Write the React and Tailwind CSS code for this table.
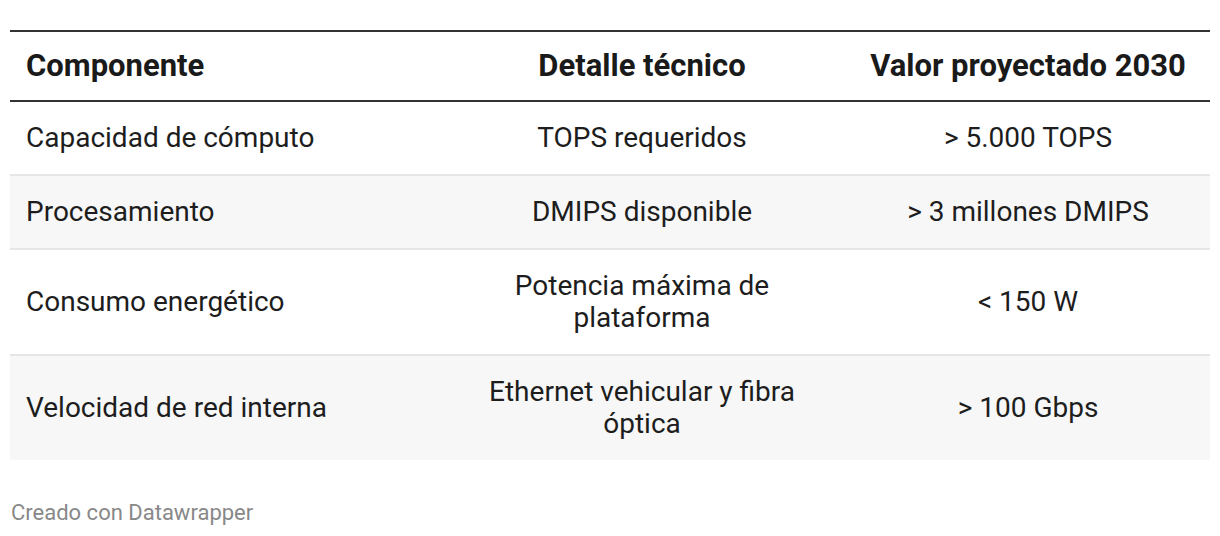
import React from "react";

const rows = [
  ["Capacidad de cómputo", "TOPS requeridos", "> 5.000 TOPS"],
  ["Procesamiento", "DMIPS disponible", "> 3 millones DMIPS"],
  ["Consumo energético", "Potencia máxima de plataforma", "< 150 W"],
  ["Velocidad de red interna", "Ethernet vehicular y fibra óptica", "> 100 Gbps"],
];

export default function App() {
  return (
    <div
      className="w-[1220px] h-[536px] bg-white overflow-hidden pt-[30px] px-[10px]"
      style={{ fontFamily: "Roboto, 'Noto Sans', sans-serif" }}
    >
      <table className="w-[1200px] table-fixed border-collapse text-[28px] leading-[32px] text-[#1d1d1d]">
        <colgroup>
          <col className="w-[428px]" />
          <col className="w-[408px]" />
          <col className="w-[364px]" />
        </colgroup>
        <thead>
          <tr className="border-t-2 border-b-2 border-[#333333] text-[31px]">
            <th className="text-left font-bold px-[16px] py-[18px] text-[#1a1a1a]">Componente</th>
            <th className="text-center font-bold px-[16px] py-[18px] text-[#1a1a1a]">Detalle técnico</th>
            <th className="text-center font-bold px-[16px] py-[18px] text-[#1a1a1a]">Valor proyectado 2030</th>
          </tr>
        </thead>
        <tbody>
          {rows.map((r, i) => (
            <tr
              key={i}
              className={
                (i % 2 === 1 ? "bg-[#f7f7f7] " : "bg-white ") +
                (i < rows.length - 1 ? "border-b-2 border-[#e6e6e6]" : "")
              }
            >
              <td className="text-left px-[16px] py-[20px] align-middle">{r[0]}</td>
              <td className="text-center px-[16px] py-[20px] align-middle">{r[1]}</td>
              <td className="text-center px-[16px] py-[20px] align-middle">{r[2]}</td>
            </tr>
          ))}
        </tbody>
      </table>
      <div className="mt-[40px] text-[22px] leading-[26px] text-[#888888] pl-[1px]">
        Creado con Datawrapper
      </div>
    </div>
  );
}
